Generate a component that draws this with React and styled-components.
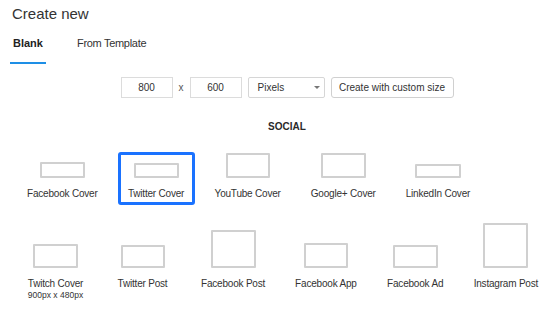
import React from 'react';
import styled, { createGlobalStyle } from 'styled-components';

const Global = createGlobalStyle`
  *, *::before, *::after { box-sizing: border-box; }
  html, body { margin: 0; padding: 0; background: #fff; overflow: hidden; }
  body { font-family: "Liberation Sans", Arial, sans-serif; color: #333; }
`;

const Page = styled.div`
  width: 550px;
  height: 309px;
  overflow: hidden;
`;

const Header = styled.div`
  padding: 5px 0 0 12px;
`;

const Title = styled.h1`
  margin: 0;
  font-size: 15px;
  line-height: 18px;
  font-weight: normal;
  color: #333;
`;

const Tabs = styled.div`
  display: flex;
  gap: 28px;
  padding-left: 10px;
  margin-top: 14px;
`;

const Tab = styled.div`
  padding: 0 3px 12px;
  font-size: 11px;
  line-height: 13px;
  letter-spacing: ${p => (p.$active ? '0' : '-0.3px')};
  font-weight: ${p => (p.$active ? 'bold' : 'normal')};
  color: ${p => (p.$active ? '#222' : '#333')};
  border-bottom: 2px solid ${p => (p.$active ? '#1e8fe6' : 'transparent')};
`;

const Center = styled.div`
  display: flex;
  flex-direction: column;
  align-items: center;
  padding-left: 24px;
`;

const SizeRow = styled.div`
  display: flex;
  align-items: center;
  gap: 6px;
  margin-top: 13px;
  height: 21px;
`;

const NumBox = styled.div`
  width: 52px;
  height: 21px;
  border: 1px solid #dcdcdc;
  display: flex;
  align-items: center;
  justify-content: center;
  font-size: 10px;
  color: #333;
`;

const Times = styled.span`
  font-size: 10px;
  color: #555;
  width: 5px;
  text-align: center;
`;

const Select = styled.div`
  width: 77px;
  height: 21px;
  border: 1px solid #d6d6d6;
  border-radius: 2px;
  display: flex;
  align-items: center;
  justify-content: space-between;
  padding: 0 3px 0 9px;
  font-size: 10px;
  color: #333;
`;

const Arrow = styled.span`
  width: 0;
  height: 0;
  border-left: 3px solid transparent;
  border-right: 3px solid transparent;
  border-top: 3px solid #777;
  margin-right: 1px;
`;

const Button = styled.div`
  width: 123px;
  height: 21px;
  border: 1px solid #d0d0d0;
  border-radius: 3px;
  display: flex;
  align-items: center;
  justify-content: center;
  font-size: 10px;
  color: #333;
  white-space: nowrap;
`;

const Section = styled.div`
  margin-top: 23px;
  font-size: 10px;
  line-height: 12px;
  font-weight: bold;
  color: #2a2a2a;
`;

const Row = styled.div`
  display: flex;
  align-items: ${p => p.$align};
  gap: 10px;
  padding-left: 17px;
  margin-top: ${p => p.$top}px;
  white-space: nowrap;
`;

const Item = styled.div`
  display: flex;
  flex-direction: column;
  align-items: center;
  min-width: 77px;
  padding: 8px 7px 2px;
  border: 3px solid ${p => (p.$selected ? '#1a72ff' : 'transparent')};
  border-radius: 3px;
`;

const ThumbArea = styled.div`
  height: ${p => p.$h}px;
  display: flex;
  align-items: flex-end;
  justify-content: center;
`;

const Thumb = styled.div`
  width: ${p => p.$w}px;
  height: ${p => p.$h}px;
  border: 2px solid #d0d0d0;
  border-radius: 1px;
`;

const Label = styled.div`
  margin-top: 10px;
  font-size: 10px;
  line-height: 12px;
  letter-spacing: -0.2px;
  color: #333;
`;

const Sub = styled.div`
  font-size: 8.5px;
  line-height: 10px;
  color: #333;
`;

const row1 = [
  { name: 'Facebook Cover', w: 45, h: 16 },
  { name: 'Twitter Cover', w: 45, h: 15, selected: true },
  { name: 'YouTube Cover', w: 44, h: 25 },
  { name: 'Google+ Cover', w: 45, h: 25 },
  { name: 'LinkedIn Cover', w: 46, h: 14 },
];

const row2 = [
  { name: 'Twitch Cover', w: 45, h: 24, sub: '900px x 480px' },
  { name: 'Twitter Post', w: 44, h: 23 },
  { name: 'Facebook Post', w: 45, h: 38 },
  { name: 'Facebook App', w: 44, h: 25 },
  { name: 'Facebook Ad', w: 45, h: 23 },
  { name: 'Instagram Post', w: 45, h: 45 },
];

function Template({ t, area }) {
  return (
    <Item $selected={t.selected}>
      <ThumbArea $h={area || t.h}>
        <Thumb $w={t.w} $h={t.h} />
      </ThumbArea>
      <Label>{t.name}</Label>
      {t.sub && <Sub>{t.sub}</Sub>}
    </Item>
  );
}

export default function App() {
  return (
    <Page>
      <Global />
      <Header>
        <Title>Create new</Title>
      </Header>
      <Tabs>
        <Tab $active>Blank</Tab>
        <Tab>From Template</Tab>
      </Tabs>
      <Center>
        <SizeRow>
          <NumBox>800</NumBox>
          <Times>x</Times>
          <NumBox>600</NumBox>
          <Select>
            <span>Pixels</span>
            <Arrow />
          </Select>
          <Button>Create with custom size</Button>
        </SizeRow>
        <Section>SOCIAL</Section>
      </Center>
      <Row $top={9} $align="flex-end">
        {row1.map(t => (
          <Template key={t.name} t={t} />
        ))}
      </Row>
      <Row $top={7} $align="flex-start">
        {row2.map(t => (
          <Template key={t.name} t={t} area={45} />
        ))}
      </Row>
    </Page>
  );
}
